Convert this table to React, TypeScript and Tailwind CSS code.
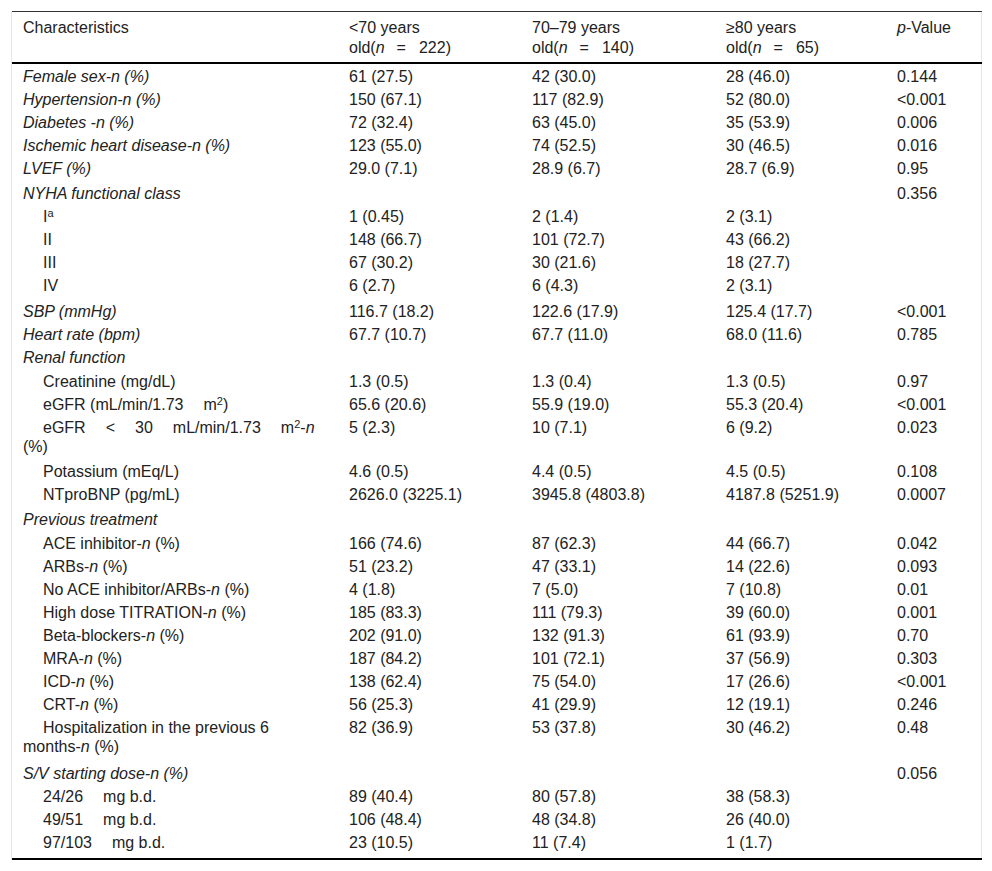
import { ReactNode } from "react";

interface Row {
    label: ReactNode;
    cells: string[];
    sub?: boolean;
    italic?: boolean;
    pad?: string;
}

const N = () => <i>n</i>;
const Gap = () => <span className="inline-block w-[20px]" />;

const rows: Row[] = [
    { label: "Female sex-n (%)", italic: true, cells: ["61 (27.5)", "42 (30.0)", "28 (46.0)", "0.144"] },
    { label: "Hypertension-n (%)", italic: true, cells: ["150 (67.1)", "117 (82.9)", "52 (80.0)", "<0.001"] },
    { label: "Diabetes -n (%)", italic: true, cells: ["72 (32.4)", "63 (45.0)", "35 (53.9)", "0.006"] },
    { label: "Ischemic heart disease-n (%)", italic: true, cells: ["123 (55.0)", "74 (52.5)", "30 (46.5)", "0.016"] },
    { label: "LVEF (%)", italic: true, cells: ["29.0 (7.1)", "28.9 (6.7)", "28.7 (6.9)", "0.95"] },
    { label: "NYHA functional class", italic: true, cells: ["", "", "", "0.356"], pad: "pt-[5px] pb-[1px]" },
    { label: <>I<sup className="text-[11px]">a</sup></>, sub: true, cells: ["1 (0.45)", "2 (1.4)", "2 (3.1)", ""] },
    { label: "II", sub: true, cells: ["148 (66.7)", "101 (72.7)", "43 (66.2)", ""] },
    { label: "III", sub: true, cells: ["67 (30.2)", "30 (21.6)", "18 (27.7)", ""] },
    { label: "IV", sub: true, cells: ["6 (2.7)", "6 (4.3)", "2 (3.1)", ""] },
    { label: "SBP (mmHg)", italic: true, cells: ["116.7 (18.2)", "122.6 (17.9)", "125.4 (17.7)", "<0.001"], pad: "pt-[6px] pb-[1px]" },
    { label: "Heart rate (bpm)", italic: true, cells: ["67.7 (10.7)", "67.7 (11.0)", "68.0 (11.6)", "0.785"] },
    { label: "Renal function", italic: true, cells: ["", "", "", ""] },
    { label: "Creatinine (mg/dL)", sub: true, cells: ["1.3 (0.5)", "1.3 (0.4)", "1.3 (0.5)", "0.97"], pad: "pt-[4px] pb-[1px]" },
    { label: <>eGFR (mL/min/1.73<Gap />m<sup className="text-[11px]">2</sup>)</>, sub: true, cells: ["65.6 (20.6)", "55.9 (19.0)", "55.3 (20.4)", "<0.001"] },
    {
        label: <>eGFR<Gap />&lt;<Gap />30<Gap />mL/min/1.73<Gap />m<sup className="text-[11px]">2</sup>-<N /><br />(%)</>,
        sub: true,
        cells: ["5 (2.3)", "10 (7.1)", "6 (9.2)", "0.023"],
    },
    { label: "Potassium (mEq/L)", sub: true, cells: ["4.6 (0.5)", "4.4 (0.5)", "4.5 (0.5)", "0.108"], pad: "pt-[5px] pb-[1px]" },
    { label: "NTproBNP (pg/mL)", sub: true, cells: ["2626.0 (3225.1)", "3945.8 (4803.8)", "4187.8 (5251.9)", "0.0007"] },
    { label: "Previous treatment", italic: true, cells: ["", "", "", ""], pad: "pt-[5px] pb-[1px]" },
    { label: <>ACE inhibitor-<N /> (%)</>, sub: true, cells: ["166 (74.6)", "87 (62.3)", "44 (66.7)", "0.042"], pad: "pt-[4px] pb-[1px]" },
    { label: <>ARBs-<N /> (%)</>, sub: true, cells: ["51 (23.2)", "47 (33.1)", "14 (22.6)", "0.093"] },
    { label: <>No ACE inhibitor/ARBs-<N /> (%)</>, sub: true, cells: ["4 (1.8)", "7 (5.0)", "7 (10.8)", "0.01"] },
    { label: <>High dose TITRATION-<N /> (%)</>, sub: true, cells: ["185 (83.3)", "111 (79.3)", "39 (60.0)", "0.001"] },
    { label: <>Beta-blockers-<N /> (%)</>, sub: true, cells: ["202 (91.0)", "132 (91.3)", "61 (93.9)", "0.70"] },
    { label: <>MRA-<N /> (%)</>, sub: true, cells: ["187 (84.2)", "101 (72.1)", "37 (56.9)", "0.303"] },
    { label: <>ICD-<N /> (%)</>, sub: true, cells: ["138 (62.4)", "75 (54.0)", "17 (26.6)", "<0.001"] },
    { label: <>CRT-<N /> (%)</>, sub: true, cells: ["56 (25.3)", "41 (29.9)", "12 (19.1)", "0.246"] },
    {
        label: <>Hospitalization in the previous 6<br />months-<N /> (%)</>,
        sub: true,
        cells: ["82 (36.9)", "53 (37.8)", "30 (46.2)", "0.48"],
    },
    { label: "S/V starting dose-n (%)", italic: true, cells: ["", "", "", "0.056"], pad: "pt-[7px] pb-[1px]" },
    { label: <>24/26<Gap />mg b.d.</>, sub: true, cells: ["89 (40.4)", "80 (57.8)", "38 (58.3)", ""] },
    { label: <>49/51<Gap />mg b.d.</>, sub: true, cells: ["106 (48.4)", "48 (34.8)", "26 (40.0)", ""] },
    { label: <>97/103<Gap />mg b.d.</>, sub: true, cells: ["23 (10.5)", "11 (7.4)", "1 (1.7)", ""], pad: "pt-[3px] pb-[6px]" },
];

export default function App() {
    return (
        <main className="min-h-screen bg-white pt-[11px] pl-[11px] font-['Liberation_Sans',Arial,sans-serif] text-[16px] text-[#222]">
            <div className="w-[971px] border-x border-[#e6e6e6]">
                <table className="w-[970px] table-fixed border-collapse">
                    <colgroup>
                        <col className="w-[326px]" />
                        <col className="w-[183px]" />
                        <col className="w-[194px]" />
                        <col className="w-[171px]" />
                        <col className="w-[96px]" />
                    </colgroup>
                    <thead>
                        <tr className="border-t border-[#333] border-b-2 border-b-black">
                            <th className="pl-[11px] pt-[6px] pb-[4px] text-left align-top font-normal leading-[20px]">
                                Characteristics
                            </th>
                            <th className="pl-[11px] pt-[6px] pb-[4px] text-left align-top font-normal leading-[20px]">
                                &lt;70 years
                                <br />
                                old(<i>n</i>
                                <span className="inline-block w-[12px]" />=
                                <span className="inline-block w-[13px]" />222)
                            </th>
                            <th className="pl-[11px] pt-[6px] pb-[4px] text-left align-top font-normal leading-[20px]">
                                70–79 years
                                <br />
                                old(<i>n</i>
                                <span className="inline-block w-[12px]" />=
                                <span className="inline-block w-[13px]" />140)
                            </th>
                            <th className="pl-[11px] pt-[6px] pb-[4px] text-left align-top font-normal leading-[20px]">
                                ≥80 years
                                <br />
                                old(<i>n</i>
                                <span className="inline-block w-[12px]" />=
                                <span className="inline-block w-[13px]" />65)
                            </th>
                            <th className="pl-[11px] pt-[6px] pb-[4px] text-left align-top font-normal leading-[20px]">
                                <i>p</i>-Value
                            </th>
                        </tr>
                    </thead>
                    <tbody className="border-b-2 border-black">
                        {rows.map((row, i) => {
                            const pad = row.pad ?? "pt-[3px] pb-[1px]";
                            return (
                                <tr key={i}>
                                    <td
                                        className={`pl-[11px] align-top leading-[19px] ${pad} ${row.sub ? "indent-[20px]" : ""} ${row.italic ? "italic" : ""}`}
                                    >
                                        {row.label}
                                    </td>
                                    {row.cells.map((c, j) => (
                                        <td key={j} className={`pl-[11px] align-top leading-[19px] ${pad}`}>
                                            {c}
                                        </td>
                                    ))}
                                </tr>
                            );
                        })}
                    </tbody>
                </table>
            </div>
        </main>
    );
}
